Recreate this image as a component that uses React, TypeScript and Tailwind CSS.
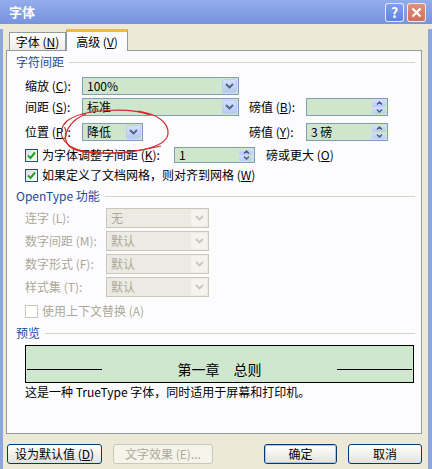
import React from "react";

const Chevron = ({ color = "#4d6185" }: { color?: string }) => (
  <svg width="9" height="6" viewBox="0 0 9 6">
    <path d="M1 1l3.5 3.5L8 1" fill="none" stroke={color} strokeWidth="1.8" />
  </svg>
);

const SpinArrows = () => (
  <div className="flex w-[15px] flex-col gap-[1px] py-[1px] pr-[1px]">
    <div className="flex flex-1 items-center justify-center rounded-[2px] bg-gradient-to-b from-[#d3e0fb] to-[#b6cbf5]">
      <svg width="7" height="4" viewBox="0 0 7 4">
        <path d="M1 3.5l2.5-2.5L6 3.5" fill="none" stroke="#4d6185" strokeWidth="1.5" />
      </svg>
    </div>
    <div className="flex flex-1 items-center justify-center rounded-[2px] bg-gradient-to-b from-[#d3e0fb] to-[#b6cbf5]">
      <svg width="7" height="4" viewBox="0 0 7 4">
        <path d="M1 0.5l2.5 2.5L6 0.5" fill="none" stroke="#4d6185" strokeWidth="1.5" />
      </svg>
    </div>
  </div>
);

function Combo({ value, className, disabled }: { value: string; className: string; disabled?: boolean }) {
  return (
    <div
      className={
        disabled
          ? `flex h-full border border-[#c9c7ba] bg-[#ecebe3] ${className}`
          : `flex h-full border border-[#7f9db9] bg-[#cfe6cc] ${className}`
      }
    >
      <span className={disabled ? "flex flex-1 items-center pl-[4px] text-[#aca899]" : "flex flex-1 items-center pl-[4px]"}>
        {value}
      </span>
      {disabled ? (
        <div className="m-[1px] flex w-[16px] items-center justify-center rounded-[2px] bg-[#f4f3ee]">
          <Chevron color="#c9c7ba" />
        </div>
      ) : (
        <div className="m-[1px] flex w-[15px] items-center justify-center rounded-[2px] border border-[#bccdf3] bg-gradient-to-b from-[#d3e0fb] to-[#b4c9f5]">
          <Chevron />
        </div>
      )}
    </div>
  );
}

function Spinner({ value, className }: { value: string; className: string }) {
  return (
    <div className={`flex h-full border border-[#7f9db9] bg-[#cfe6cc] ${className}`}>
      <span className="flex flex-1 items-center pl-[4px]">{value}</span>
      <SpinArrows />
    </div>
  );
}

function Checkbox({ checked, disabled }: { checked?: boolean; disabled?: boolean }) {
  return (
    <div
      className={
        disabled
          ? "flex h-[13px] w-[13px] shrink-0 items-center justify-center border border-[#cac8bb] bg-white"
          : "flex h-[13px] w-[13px] shrink-0 items-center justify-center border border-[#1c5180] bg-gradient-to-br from-[#dcdcd7] to-white"
      }
    >
      {checked && (
        <svg width="9" height="9" viewBox="0 0 9 9">
          <path d="M1 4.5l2.5 2.5L8 1.5" fill="none" stroke="#21a121" strokeWidth="2" />
        </svg>
      )}
    </div>
  );
}

// mnemonic letter, underlined like the Windows dialogs
const U = ({ c }: { c: string }) => (
  <>
    {" "}(<span className="underline">{c}</span>)
  </>
);

function Section({ title, className }: { title: React.ReactNode; className: string }) {
  return (
    <div className={`flex h-[14px] items-center pl-[9px] pr-[6px] ${className}`}>
      <span className="text-[#1e4b9b]">{title}</span>
      <div className="ml-[5px] h-px flex-1 bg-[#d6d3c4]" />
    </div>
  );
}

function XPButton({ children, className, disabled, primary }: { children: React.ReactNode; className: string; disabled?: boolean; primary?: boolean }) {
  if (disabled) {
    return (
      <div className={`flex h-full items-center justify-center rounded-[3px] border border-[#c9c7ba] bg-[#f5f4ea] text-[#aca899] ${className}`}>
        {children}
      </div>
    );
  }
  return (
    <div className={`flex h-full items-center justify-center rounded-[3px] border border-[#003c74] bg-gradient-to-b from-white to-[#e3e2da] ${className}`}>
      <div className={primary ? "flex h-full w-full items-center justify-center rounded-[2px] border border-[#a9c4f0]" : "flex h-full w-full items-center justify-center"}>
        {children}
      </div>
    </div>
  );
}

export default function App() {
  return (
    <div
      className="relative h-[469px] w-[432px] overflow-hidden bg-[#ece9d8] text-[12px] leading-[14px] text-black"
      style={{ fontFamily: '"Noto Sans CJK SC", "Noto Sans", sans-serif' }}
    >
      {/* Title bar */}
      <div className="flex h-[24px] items-center bg-gradient-to-b from-[#93acec] to-[#7793de] pl-[9px] pr-[6px]">
        <span className="text-[13px] font-bold text-white">字体</span>
        <div className="ml-auto flex gap-[3px]">
          <div className="flex h-[19px] w-[19px] items-center justify-center rounded-[3px] border border-white/80 bg-gradient-to-b from-[#7fa0ee] to-[#5f84de] text-[14px] font-bold text-white">
            ?
          </div>
          <div className="flex h-[19px] w-[19px] items-center justify-center rounded-[3px] border border-white/80 bg-gradient-to-b from-[#e2907e] to-[#cf6f5c]">
            <svg width="11" height="11" viewBox="0 0 11 11">
              <path d="M1.5 1.5l8 8M9.5 1.5l-8 8" stroke="white" strokeWidth="2.2" />
            </svg>
          </div>
        </div>
      </div>

      {/* Window body */}
      <div className="h-[445px] border-l-[3px] border-r-[4px] border-[#8ea6df]">
        {/* Tabs */}
        <div className="mt-[5px] flex h-[21px] items-end pl-[6px]">
          <div className="flex h-[18px] w-[57px] items-center justify-center border border-b-0 border-[#919b9c] bg-gradient-to-b from-white to-[#ecebe6]">
            字体<U c="N" />
          </div>
          <div className="relative z-10 -mb-[1px] flex h-[22px] w-[62px] items-center justify-center border-x border-[#919b9c] border-t-[3px] border-t-[#f2b847] bg-[#fcfcfe]">
            高级<U c="V" />
          </div>
        </div>

        {/* Panel */}
        <div className="ml-[3px] flex h-[384px] w-[416px] flex-col border border-[#919b9c] bg-[#fcfcfe]">
          <Section title="字符间距" className="mt-[4px]" />

          <div className="mt-[8px] flex h-[18px] items-center pl-[18px]">
            <span className="w-[57px]">缩放<U c="C" />:</span>
            <Combo value="100%" className="w-[157px]" />
          </div>

          <div className="mt-[3px] flex h-[18px] items-center pl-[18px]">
            <span className="w-[57px]">间距<U c="S" />:</span>
            <Combo value="标准" className="w-[157px]" />
            <span className="ml-[10px] w-[57px]">磅值<U c="B" />:</span>
            <Spinner value="" className="w-[82px]" />
          </div>

          <div className="mt-[7px] flex h-[18px] items-center pl-[18px]">
            <span className="w-[57px]">位置<U c="P" />:</span>
            <div className="h-full w-[157px]">
              <Combo value="降低" className="w-[61px]" />
            </div>
            <span className="ml-[10px] w-[57px]">磅值<U c="Y" />:</span>
            <Spinner value="3 磅" className="w-[82px]" />
          </div>

          <div className="mt-[6px] flex h-[16px] items-center pl-[18px]">
            <div className="flex w-[149px] items-center gap-[4px]">
              <Checkbox checked />
              <span>为字体调整字间距<U c="K" />:</span>
            </div>
            <Spinner value="1" className="w-[81px]" />
            <span className="ml-[11px]">磅或更大<U c="O" /></span>
          </div>

          <div className="mt-[5px] flex h-[14px] items-center gap-[4px] pl-[18px]">
            <Checkbox checked />
            <span>如果定义了文档网格，则对齐到网格<U c="W" /></span>
          </div>

          <Section title="OpenType 功能" className="mt-[7px]" />

          <div className="mt-[5px] flex h-[20px] items-center pl-[18px] text-[#aca899]">
            <span className="w-[81px]">连字 (L):</span>
            <Combo value="无" className="w-[103px]" disabled />
          </div>
          <div className="mt-[3px] flex h-[20px] items-center pl-[18px] text-[#aca899]">
            <span className="w-[81px]">数字间距 (M):</span>
            <Combo value="默认" className="w-[103px]" disabled />
          </div>
          <div className="mt-[3px] flex h-[20px] items-center pl-[18px] text-[#aca899]">
            <span className="w-[81px]">数字形式 (F):</span>
            <Combo value="默认" className="w-[103px]" disabled />
          </div>
          <div className="mt-[3px] flex h-[20px] items-center pl-[18px] text-[#aca899]">
            <span className="w-[81px]">样式集 (T):</span>
            <Combo value="默认" className="w-[103px]" disabled />
          </div>

          <div className="mt-[7px] flex h-[14px] items-center gap-[4px] pl-[18px] text-[#aca899]">
            <Checkbox disabled />
            <span>使用上下文替换 (A)</span>
          </div>

          <Section title="预览" className="mt-[8px]" />

          <div className="ml-[18px] mt-[5px] flex h-[38px] w-[389px] items-center border border-black bg-[#cfe7cf] pt-[10px]">
            <div className="ml-[1px] h-px w-[75px] bg-black" />
            <span className="flex-1 text-center text-[14px]">第一章　总则</span>
            <div className="mr-[1px] h-px w-[75px] bg-black" />
          </div>

          <div className="ml-[18px] mt-[2px] h-[14px]">这是一种 TrueType 字体，同时适用于屏幕和打印机。</div>
        </div>

        {/* Buttons */}
        <div className="mt-[10px] flex h-[20px]">
          <XPButton className="ml-[4px] w-[95px]">
            <span>设为默认值<U c="D" /></span>
          </XPButton>
          <XPButton className="ml-[11px] w-[100px]" disabled>
            文字效果 (E)...
          </XPButton>
          <XPButton className="ml-[51px] w-[73px]" primary>
            确定
          </XPButton>
          <XPButton className="ml-[11px] w-[74px]">取消</XPButton>
        </div>
      </div>

      {/* Hand-drawn red annotation circle */}
      <svg className="pointer-events-none absolute left-0 top-0" width="432" height="469">
        <path
          d="M150 115 C130 107 82 109 67 121 C55 132 62 149 90 152 C120 156 166 150 168 134 C169 123 158 114 138 111"
          fill="none"
          stroke="#d42a2a"
          strokeWidth="1.2"
        />
        <path
          d="M86 114 C70 120 60 136 69 146 C81 157 128 154 161 146"
          fill="none"
          stroke="#d42a2a"
          strokeWidth="1.2"
        />
      </svg>
    </div>
  );
}
